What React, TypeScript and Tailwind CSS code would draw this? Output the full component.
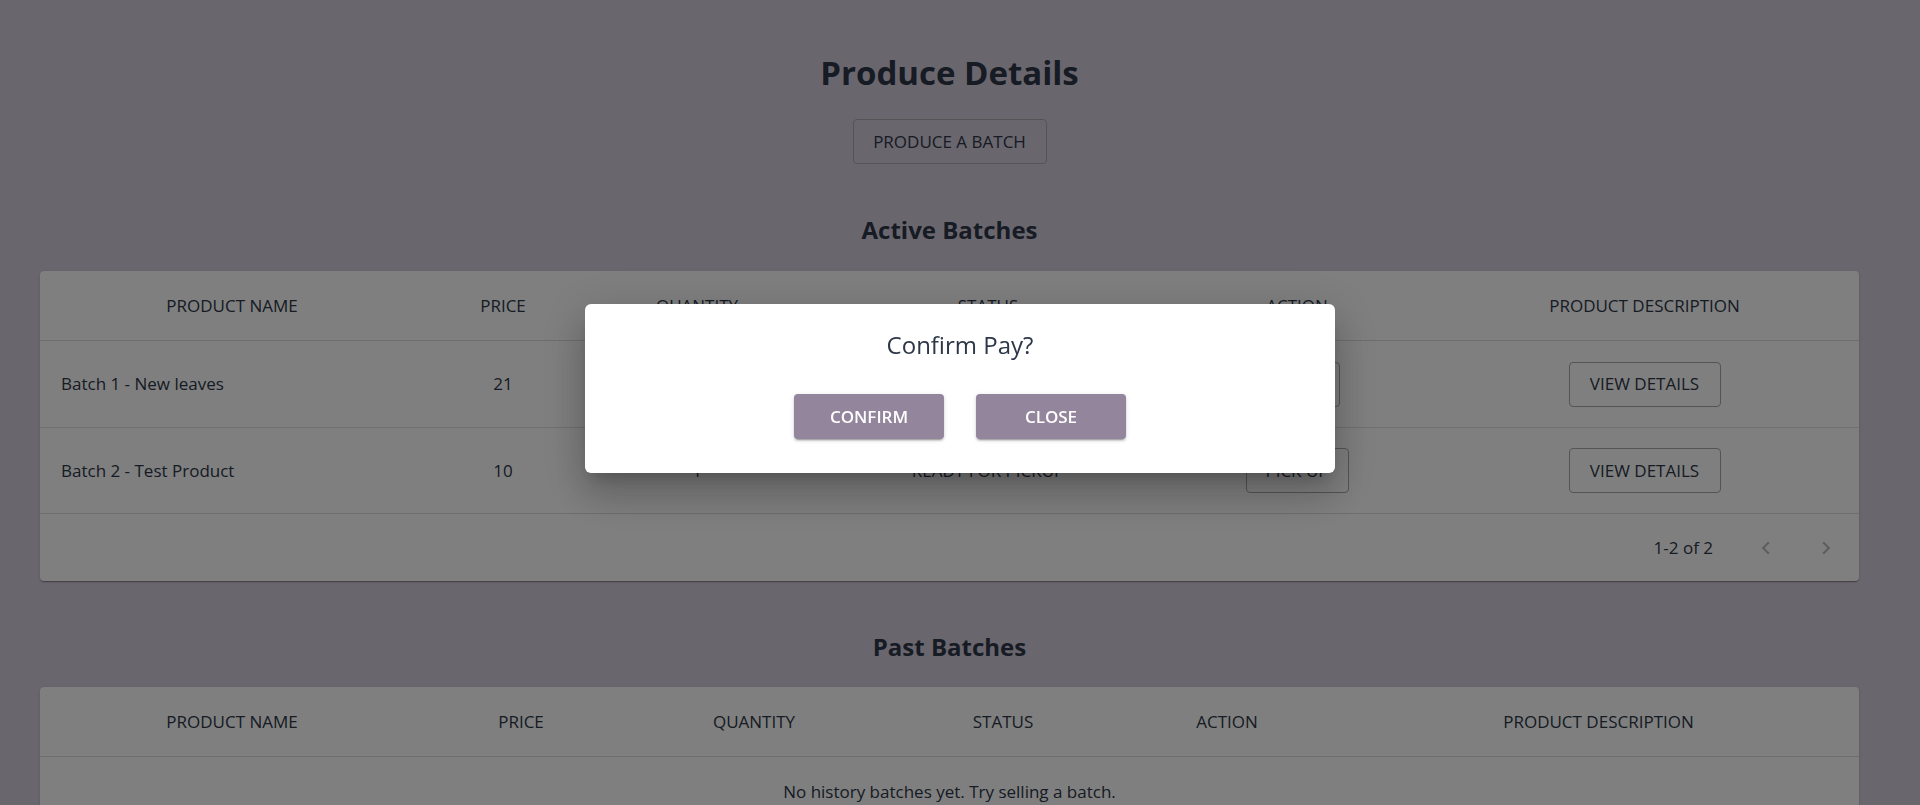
import React from "react";

const activeCols = "grid grid-cols-[384px_158px_230px_352px_266px_429px]";
const pastCols = "grid grid-cols-[384px_194px_272px_226px_222px_521px]";

function OutlinedButton({ label, className = "" }: { label: string; className?: string }) {
  return (
    <button
      className={
        "h-[45px] rounded-[4px] border border-[#a9a9a9] text-[17px] font-medium uppercase text-[#2d3748] " +
        className
      }
    >
      {label}
    </button>
  );
}

function HeaderRow({ cols, labels }: { cols: string; labels: string[] }) {
  return (
    <div className={cols + " h-[70px] items-center border-b border-[#dcdcdc]"}>
      {labels.map((l) => (
        <div key={l} className="text-center text-[17px] font-medium text-[#2d3748]">
          {l}
        </div>
      ))}
    </div>
  );
}

const headers = ["PRODUCT NAME", "PRICE", "QUANTITY", "STATUS", "ACTION", "PRODUCT DESCRIPTION"];

const paperShadow =
  "shadow-[0_2px_1px_-1px_rgba(0,0,0,0.2),0_1px_1px_0_rgba(0,0,0,0.14),0_1px_3px_0_rgba(0,0,0,0.12)]";

export default function App() {
  return (
    <div className="relative h-[805px] overflow-hidden bg-[#d4ccdc] pl-[40px] pr-[61px] pt-[53px] font-['Open_Sans','Noto_Sans',sans-serif] text-[#2d3748]">
      <h1 className="text-center text-[33px] font-bold leading-[39px] text-[#2d3748]">Produce Details</h1>
      <div className="mt-[27px] flex justify-center">
        <OutlinedButton label="Produce a batch" className="w-[194px]" />
      </div>

      <h2 className="mt-[50px] text-center text-[24px] font-bold leading-[32px]">Active Batches</h2>
      <div className={"mt-[25px] rounded-[4px] bg-white " + paperShadow}>
        <HeaderRow cols={activeCols} labels={headers} />
        <div className={activeCols + " h-[87px] items-center border-b border-[#e0e0e0] text-[17px]"}>
          <div className="pl-[21px]">Batch 1 - New leaves</div>
          <div className="text-center">21</div>
          <div className="text-center">1</div>
          <div className="text-center">PENDING PAYMENT</div>
          <div className="flex justify-center">
            <OutlinedButton label="Pay" className="w-[86px]" />
          </div>
          <div className="flex justify-center">
            <OutlinedButton label="View details" className="w-[152px]" />
          </div>
        </div>
        <div className={activeCols + " h-[86px] items-center border-b border-[#dcdcdc] text-[17px]"}>
          <div className="pl-[21px]">Batch 2 - Test Product</div>
          <div className="text-center">10</div>
          <div className="text-center">1</div>
          <div className="text-center">READY FOR PICKUP</div>
          <div className="flex justify-center">
            <OutlinedButton label="Pick up" className="h-[43px] w-[103px]" />
          </div>
          <div className="flex justify-center">
            <OutlinedButton label="View details" className="w-[152px]" />
          </div>
        </div>
        <div className="flex h-[67px] items-center justify-end pr-[13px] text-[17px]">
          <span>1-2 of 2</span>
          <div className="ml-[33px] flex items-center gap-[20px]">
            <span className="flex h-[40px] w-[40px] items-center justify-center text-black/[0.26]">
              <svg width="26" height="26" viewBox="0 0 24 24" fill="currentColor">
                <path d="M15.41 16.59 10.83 12l4.58-4.59L14 6l-6 6 6 6 1.41-1.41z" />
              </svg>
            </span>
            <span className="flex h-[40px] w-[40px] items-center justify-center text-black/[0.26]">
              <svg width="26" height="26" viewBox="0 0 24 24" fill="currentColor">
                <path d="M8.59 16.59 13.17 12 8.59 7.41 10 6l6 6-6 6-1.41-1.41z" />
              </svg>
            </span>
          </div>
        </div>
      </div>

      <h2 className="mt-[50px] text-center text-[24px] font-bold leading-[32px]">Past Batches</h2>
      <div className={"mt-[24px] rounded-[4px] bg-white " + paperShadow}>
        <HeaderRow cols={pastCols} labels={headers} />
        <div className="flex h-[70px] items-center justify-center text-[17px]">
          No history batches yet. Try selling a batch.
        </div>
      </div>

      {/* Backdrop + modal */}
      <div className="fixed inset-0 bg-black/50" />
      <div className="fixed inset-0 flex justify-center">
        <div className="mt-[304px] flex h-[169px] w-[750px] flex-col items-center rounded-[6px] bg-white pt-[25px] shadow-[0_11px_15px_-7px_rgba(0,0,0,0.2),0_24px_38px_3px_rgba(0,0,0,0.14),0_9px_46px_8px_rgba(0,0,0,0.12)]">
          <div className="text-[24px] leading-[32px] text-[#2d3748]">Confirm Pay?</div>
          <div className="mt-[33px] flex gap-[32px]">
            <button className="h-[45px] w-[150px] rounded-[4px] bg-[#93859b] text-[17px] font-semibold text-white shadow-[0_3px_1px_-2px_rgba(0,0,0,0.2),0_2px_2px_0_rgba(0,0,0,0.14),0_1px_5px_0_rgba(0,0,0,0.12)]">
              CONFIRM
            </button>
            <button className="h-[45px] w-[150px] rounded-[4px] bg-[#93859b] text-[17px] font-semibold text-white shadow-[0_3px_1px_-2px_rgba(0,0,0,0.2),0_2px_2px_0_rgba(0,0,0,0.14),0_1px_5px_0_rgba(0,0,0,0.12)]">
              CLOSE
            </button>
          </div>
        </div>
      </div>
    </div>
  );
}
